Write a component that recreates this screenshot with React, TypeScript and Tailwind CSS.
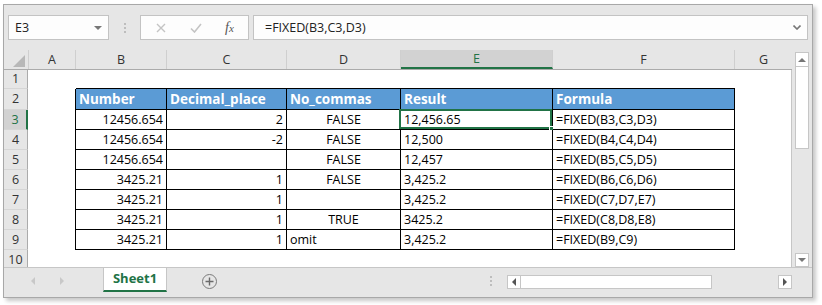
import React from "react";

const cols = [
  { key: "A", w: "w-[48px]" },
  { key: "B", w: "w-[91px]" },
  { key: "C", w: "w-[120px]" },
  { key: "D", w: "w-[114px]" },
  { key: "E", w: "w-[152px]" },
  { key: "F", w: "w-[182px]" },
  { key: "G", w: "w-[57px]" },
];

type RowData = { b: string; c: string; d: string; e: string; f: string };

const data: RowData[] = [
  { b: "12456.654", c: "2", d: "FALSE", e: "12,456.65", f: "=FIXED(B3,C3,D3)" },
  { b: "12456.654", c: "-2", d: "FALSE", e: "12,500", f: "=FIXED(B4,C4,D4)" },
  { b: "12456.654", c: "", d: "FALSE", e: "12,457", f: "=FIXED(B5,C5,D5)" },
  { b: "3425.21", c: "1", d: "FALSE", e: "3,425.2", f: "=FIXED(B6,C6,D6)" },
  { b: "3425.21", c: "1", d: "", e: "3,425.2", f: "=FIXED(C7,D7,E7)" },
  { b: "3425.21", c: "1", d: "TRUE", e: "3425.2", f: "=FIXED(C8,D8,E8)" },
  { b: "3425.21", c: "1", d: "omit", e: "3,425.2", f: "=FIXED(B9,C9)" },
];

const rowHeights: Record<number, string> = { 1: "h-[19px]", 2: "h-[21px]" };

function cellText(r: number, key: string) {
  if (r === 2) {
    return { B: "Number", C: "Decimal_place", D: "No_commas", E: "Result", F: "Formula" }[key] ?? "";
  }
  const d = data[r - 3];
  if (!d) return "";
  return { B: d.b, C: d.c, D: d.d, E: d.e, F: d.f }[key] ?? "";
}

function cellAlign(r: number, key: string, text: string) {
  if (r === 2) return "justify-start pl-[3px]";
  if (key === "B" || key === "C") return "justify-end pr-[3px]";
  if (key === "D") return text === "omit" ? "justify-start pl-[3px]" : "justify-center";
  return "justify-start pl-[3px]";
}

function SheetRow({ r }: { r: number }) {
  const h = rowHeights[r] ?? "h-[20px]";
  const selected = r === 3;
  return (
    <div className={`flex ${h} shrink-0`}>
      <div
        className={`flex w-[24px] shrink-0 items-center justify-center border-b border-b-[#d6d6d6] pt-[1px] text-[12.5px] ${
          selected
            ? "border-r-2 border-r-[#217346] bg-[#d2d2d2] text-[#217346]"
            : "border-r border-r-[#ababab] bg-[#e6e6e6] text-[#333]"
        }`}
      >
        {r}
      </div>
      {cols.map(({ key, w }) => {
        const inTable = r >= 2 && r <= 9 && "BCDEF".includes(key);
        const text = cellText(r, key);
        let cls = `${w} shrink-0 relative flex items-center pt-[2px] bg-white text-[12.5px] text-black`;
        if (inTable) cls += " border-r border-b border-black";
        if (key === "A" && r >= 2 && r <= 9) cls += " border-r border-black";
        if (r === 1 && "BCDEF".includes(key)) cls += " border-b border-black";
        if (key === "G") cls += " border-r border-r-[#c6c6c6]";
        if (r === 2 && inTable) cls += " !bg-[#5b9bd5] !text-[13.5px] font-bold text-white";
        return (
          <div key={key} className={`${cls} ${cellAlign(r, key, text)}`}>
            <span className="whitespace-nowrap leading-none">{text}</span>
            {r === 3 && key === "E" && (
              <>
                <div className="absolute -left-[2px] -top-[1px] bottom-0 right-0 border-2 border-[#217346]" />
                <div className="absolute -bottom-[3px] -right-[3px] h-[6px] w-[6px] border border-white bg-[#217346]" />
              </>
            )}
          </div>
        );
      })}
    </div>
  );
}

function Tri({ dir, className }: { dir: "up" | "down" | "left" | "right"; className: string }) {
  const pts = {
    up: "0,5 5,0 10,5",
    down: "0,0 10,0 5,5",
    left: "5,0 5,10 0,5",
    right: "0,0 0,10 5,5",
  }[dir];
  const vb = dir === "up" || dir === "down" ? "0 0 10 5" : "0 0 5 10";
  return (
    <svg viewBox={vb} className={className}>
      <polygon points={pts} fill="currentColor" />
    </svg>
  );
}

function Dots({ className }: { className: string }) {
  return (
    <div className={`flex flex-col gap-[2px] ${className}`}>
      <span className="h-[2px] w-[2px] bg-[#bdbdbd]" />
      <span className="h-[2px] w-[2px] bg-[#bdbdbd]" />
      <span className="h-[2px] w-[2px] bg-[#bdbdbd]" />
    </div>
  );
}

export default function App() {
  return (
    <div className="h-[305px] w-[822px] overflow-hidden bg-white pl-[3px] pt-[4px] font-['Open_Sans',Arial,sans-serif]">
      <div className="flex h-[294px] w-[810px] flex-col border border-[#a8a8a8] bg-[#e6e6e6] shadow-[3px_3px_4px_rgba(0,0,0,0.22)]">
        {/* formula bar */}
        <div className="ml-[4px] mt-[10px] flex h-[25px] shrink-0 items-stretch">
          <div className="flex w-[101px] items-center justify-between border border-[#c3c3c3] bg-[#fdfdfd] pl-[6px] pr-[6px] text-[12.5px] text-[#222]">
            <span className="pt-[1px]">E3</span>
            <Tri dir="down" className="h-[4px] w-[8px] text-[#777]" />
          </div>
          <div className="flex w-[31px] items-center justify-center">
            <Dots className="" />
          </div>
          <div className="flex w-[109px] items-center border border-[#c3c3c3] bg-[#fdfdfd]">
            <svg viewBox="0 0 10 10" className="ml-[15px] h-[10px] w-[10px] text-[#c4c4c4]">
              <path d="M1 1 L9 9 M9 1 L1 9" stroke="currentColor" strokeWidth="1.4" />
            </svg>
            <svg viewBox="0 0 12 10" className="ml-[24px] h-[10px] w-[12px] text-[#c4c4c4]">
              <path d="M1 5.5 L4.5 9 L11 1" stroke="currentColor" strokeWidth="1.6" fill="none" />
            </svg>
            <span className="ml-[23px] font-['Liberation_Serif',serif] text-[14px] italic text-[#555]">
              f<span className="text-[11px]">x</span>
            </span>
          </div>
          <div className="ml-[4px] flex w-[555px] items-center justify-between border border-[#c3c3c3] bg-[#fdfdfd] pl-[11px] pr-[6px] text-[12.5px] text-[#222]">
            <span className="pt-[1px]">=FIXED(B3,C3,D3)</span>
            <svg viewBox="0 0 8 5" className="h-[5px] w-[8px] text-[#777]">
              <path d="M0.5 0.5 L4 4 L7.5 0.5" stroke="currentColor" strokeWidth="1.6" fill="none" />
            </svg>
          </div>
        </div>

        {/* sheet */}
        <div className="mt-[10px] flex shrink-0">
          <div className="flex w-[788px] flex-col">
            <div className="flex h-[20px] shrink-0 border-b border-b-[#ababab]">
              <div className="relative w-[24px] shrink-0">
                <svg viewBox="0 0 12 12" className="absolute bottom-[2px] right-[3px] h-[12px] w-[12px]">
                  <polygon points="12,0 12,12 0,12" fill="#b8b8b8" />
                </svg>
              </div>
              {cols.map(({ key, w }) => (
                <div
                  key={key}
                  className={`${w} flex shrink-0 items-center justify-center pt-[1px] text-[12.5px] ${
                    key === "E"
                      ? "border-b-2 border-b-[#217346] bg-[#d2d2d2] text-[#217346]"
                      : "text-[#333]"
                  } ${key !== "G" ? "border-r border-r-[#cfcfcf]" : ""} ${key === "A" ? "border-l border-l-[#cfcfcf]" : ""}`}
                >
                  {key}
                </div>
              ))}
            </div>
            <div className="flex h-[197px] flex-col overflow-hidden">
              {[1, 2, 3, 4, 5, 6, 7, 8, 9, 10].map((r) => (
                <SheetRow key={r} r={r} />
              ))}
            </div>
          </div>
          <div className="ml-[3px] mt-[2px] flex h-[215px] w-[14px] flex-col">
            <div className="flex h-[15px] items-center justify-center border border-[#c6c6c6] bg-white">
              <Tri dir="up" className="h-[4px] w-[8px] text-[#777]" />
            </div>
            <div className="h-[82px] border border-t-0 border-[#c6c6c6] bg-white" />
            <div className="flex-1" />
            <div className="flex h-[14px] items-center justify-center border border-[#c6c6c6] bg-white">
              <Tri dir="down" className="h-[4px] w-[8px] text-[#777]" />
            </div>
          </div>
        </div>

        {/* tab bar */}
        <div className="flex h-[28px] shrink-0 items-start border-t border-t-[#c6c6c6]">
          <div className="flex w-[99px] shrink-0 items-center pl-[27px] pt-[9px]">
            <Tri dir="left" className="h-[8px] w-[4px] text-[#c8c8c8]" />
            <Tri dir="right" className="ml-[25px] h-[8px] w-[4px] text-[#c8c8c8]" />
          </div>
          <div className="flex h-[24px] w-[64px] shrink-0 items-center justify-center border-x border-x-[#c6c6c6] border-b-2 border-b-[#217346] bg-white text-[13px] font-bold text-[#217346]">
            Sheet1
          </div>
          <div className="ml-[35px] mt-[6px] flex h-[15px] w-[15px] shrink-0 items-center justify-center rounded-full border border-[#7a7a7a]">
            <svg viewBox="0 0 9 9" className="h-[9px] w-[9px]">
              <path d="M4.5 0.5 V8.5 M0.5 4.5 H8.5" stroke="#6a6a6a" strokeWidth="1.4" />
            </svg>
          </div>
          <Dots className="ml-[273px] mt-[8px]" />
          <div className="ml-[15px] mt-[7px] flex h-[14px] w-[285px] shrink-0">
            <div className="flex w-[14px] items-center justify-center border border-[#c6c6c6] bg-white">
              <Tri dir="left" className="h-[8px] w-[4px] text-[#555]" />
            </div>
            <div className="w-[191px] border border-l-0 border-[#c6c6c6] bg-white" />
            <div className="flex-1" />
            <div className="flex w-[14px] items-center justify-center border border-[#c6c6c6] bg-white">
              <Tri dir="right" className="h-[8px] w-[4px] text-[#555]" />
            </div>
          </div>
        </div>
      </div>
    </div>
  );
}
